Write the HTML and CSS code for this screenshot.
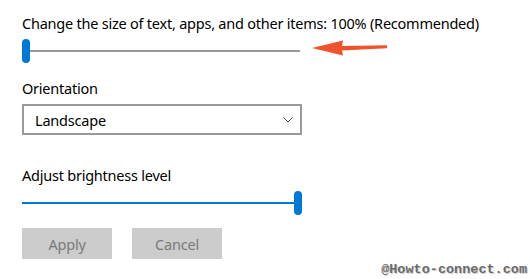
FILE: index.html
```html
<!DOCTYPE html>
<html lang="en">
<head>
    <meta charset="UTF-8">
    <title>Display settings</title>
    <link rel="stylesheet" href="styles.css">
</head>
<body>
    <div class="settings">
        <div class="label">Change the size of text, apps, and other items: 100% (Recommended)</div>

        <div class="scale-row">
            <div class="slider slider-gray">
                <div class="thumb"></div>
                <div class="track"></div>
            </div>
            <!-- pointer arrow -->
            <svg class="arrow" width="76" height="16" viewBox="0 0 76 16">
                <polygon points="0,8 31,0.6 30,6 75,5.2 75,8.2 30,10.4 31,15.4" fill="#f0532b"/>
            </svg>
        </div>

        <div class="label label-orientation">Orientation</div>
        <div class="dropdown">
            <span>Landscape</span>
            <svg width="10" height="6" viewBox="0 0 10 6">
                <polyline points="0.5,0.5 5,5 9.5,0.5" fill="none" stroke="#555" stroke-width="1"/>
            </svg>
        </div>

        <div class="label label-brightness">Adjust brightness level</div>
        <div class="slider slider-blue">
            <div class="track"></div>
            <div class="thumb"></div>
        </div>

        <div class="buttons">
            <button class="btn">Apply</button>
            <button class="btn">Cancel</button>
        </div>
    </div>

    <div class="watermark">@Howto-connect.com</div>
</body>
</html>
```

FILE: styles.css
```css
body {
    margin: 0;
    background: #fff;
    font-family: "Noto Sans", "Open Sans", sans-serif;
    color: #000;
    width: 530px;
    height: 279px;
    position: relative;
    overflow: hidden;
}
.settings {
    display: flex;
    flex-direction: column;
    align-items: flex-start;
    padding: 13px 0 0 22px;
}
.label {
    font-size: 14.5px;
    line-height: 20px;
    letter-spacing: -0.23px;
}
.scale-row {
    display: flex;
    align-items: flex-start;
    margin-top: 6px;
}
.slider {
    display: flex;
    align-items: center;
    height: 24px;
}
.slider .thumb {
    width: 8px;
    height: 24px;
    border-radius: 4px;
    background: #0078d7;
}
.slider .track {
    height: 2px;
    flex: 1;
}
.slider-gray {
    width: 278px;
}
.slider-gray .track {
    background: #999;
}
.slider-blue {
    width: 280px;
    margin-top: 6px;
}
.slider-blue .track {
    background: #0078d7;
}
.arrow {
    margin-left: 12px;
    margin-top: 1px;
}
.label-orientation {
    margin-top: 15px;
}
.dropdown {
    margin-top: 6px;
    width: 280px;
    height: 31px;
    box-sizing: border-box;
    border: 2px solid #999;
    display: flex;
    align-items: center;
    justify-content: space-between;
    padding: 0 7px 0 11px;
    font-size: 14.5px;
    letter-spacing: -0.2px;
}
.label-brightness {
    margin-top: 30px;
}
.buttons {
    display: flex;
    gap: 20px;
    margin-top: 13px;
}
.btn {
    width: 90px;
    height: 31px;
    border: none;
    background: #ccc;
    color: #7a7a7a;
    font-family: "Noto Sans", "Open Sans", sans-serif;
    font-size: 14.5px;
    letter-spacing: -0.2px;
    padding: 0;
}
.watermark {
    position: absolute;
    right: 3px;
    bottom: 2px;
    font-family: "Liberation Mono", monospace;
    font-weight: bold;
    font-size: 13.5px;
    line-height: 14px;
    color: #6a6a6a;
    text-shadow: 1px 1px 0 #d0d0d0;
}
```
